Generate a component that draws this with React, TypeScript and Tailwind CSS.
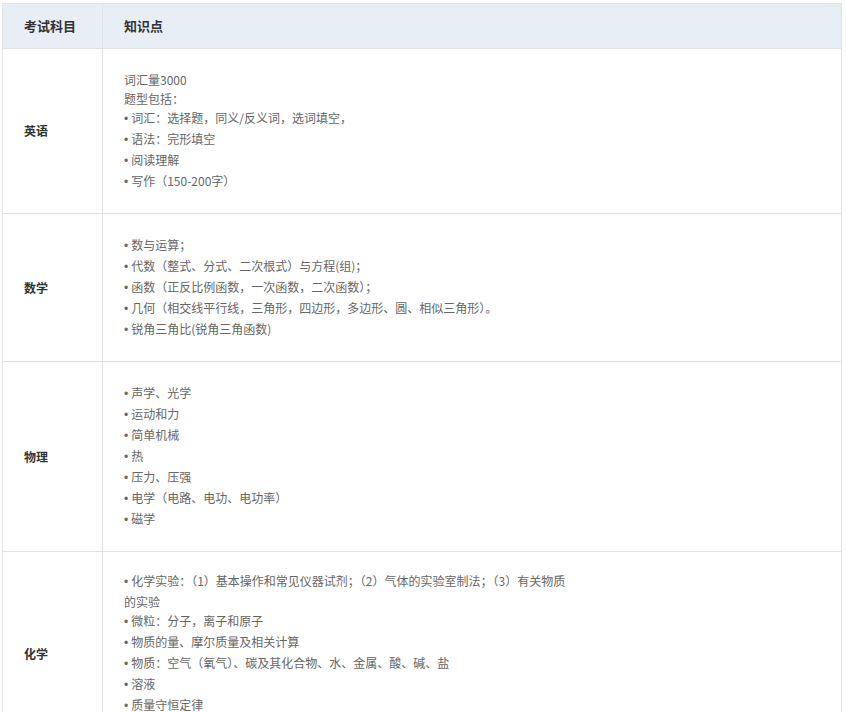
import React from "react";

const B = () => <span style={{ fontFamily: '"Liberation Sans",Arial,sans-serif' }} className="mr-[3px]">•</span>;

const rows: { s: string; items: React.ReactNode[]; pad?: string }[] = [
  { s: "英语", items: ["词汇量3000", "题型包括：", "• 词汇：选择题，同义/反义词，选词填空，", "• 语法：完形填空", "• 阅读理解", "• 写作（150-200字）"] },
  { s: "数学", items: ["• 数与运算；", "• 代数（整式、分式、二次根式）与方程(组)；", "• 函数（正反比例函数，一次函数，二次函数）；", "• 几何（相交线平行线，三角形，四边形，多边形、圆、相似三角形）。", "• 锐角三角比(锐角三角函数)"] },
  { s: "物理", items: ["• 声学、光学", "• 运动和力", "• 简单机械", "• 热", "• 压力、压强", "• 电学（电路、电功、电功率）", "• 磁学"] },
  { s: "化学", pad: "py-[19px]", items: [<><B />化学实验：（1）基本操作和常见仪器试剂；（2）气体的实验室制法；（3）有关物质<br />的实验</>, "• 微粒：分子，离子和原子", "• 物质的量、摩尔质量及相关计算", "• 物质：空气（氧气）、碳及其化合物、水、金属、酸、碱、盐", "• 溶液", "• 质量守恒定律", "• 燃料燃烧"] },
];

export default function App() {
  return (
    <div className="bg-white w-[846px] h-[712px] pl-[2px] pt-[3px]" style={{ fontFamily: '"Microsoft YaHei","Noto Sans CJK SC",sans-serif' }}>
      <div className="w-[840px] border border-[#dfe3e8]">
        <div className="flex h-[45px] bg-[#e8eef6] border-b border-[#dfe3e8] text-[13px] font-bold text-[#333]">
          <div className="w-[100px] border-r border-[#dfe3e8] flex items-center pl-[21px]">考试科目</div>
          <div className="flex-1 flex items-center pl-[21px]">知识点</div>
        </div>
        {rows.map((r, i) => (
          <div key={i} className={"flex " + (i < rows.length - 1 ? "border-b border-[#dfe3e8]" : "")}>
            <div className="w-[100px] border-r border-[#dfe3e8] flex items-center pl-[21px] text-[12px] font-bold text-[#333]">{r.s}</div>
            <div className={"flex-1 pl-[21px] text-[12px] leading-[19px] text-[#666] " + (r.pad ?? "py-[21px]")}>
              {r.items.map((t, j) => (
                <div key={j}>
                  {typeof t === "string" && t.startsWith("• ") ? <><B />{t.slice(2)}</> : t}
                </div>
              ))}
            </div>
          </div>
        ))}
      </div>
    </div>
  );
}
